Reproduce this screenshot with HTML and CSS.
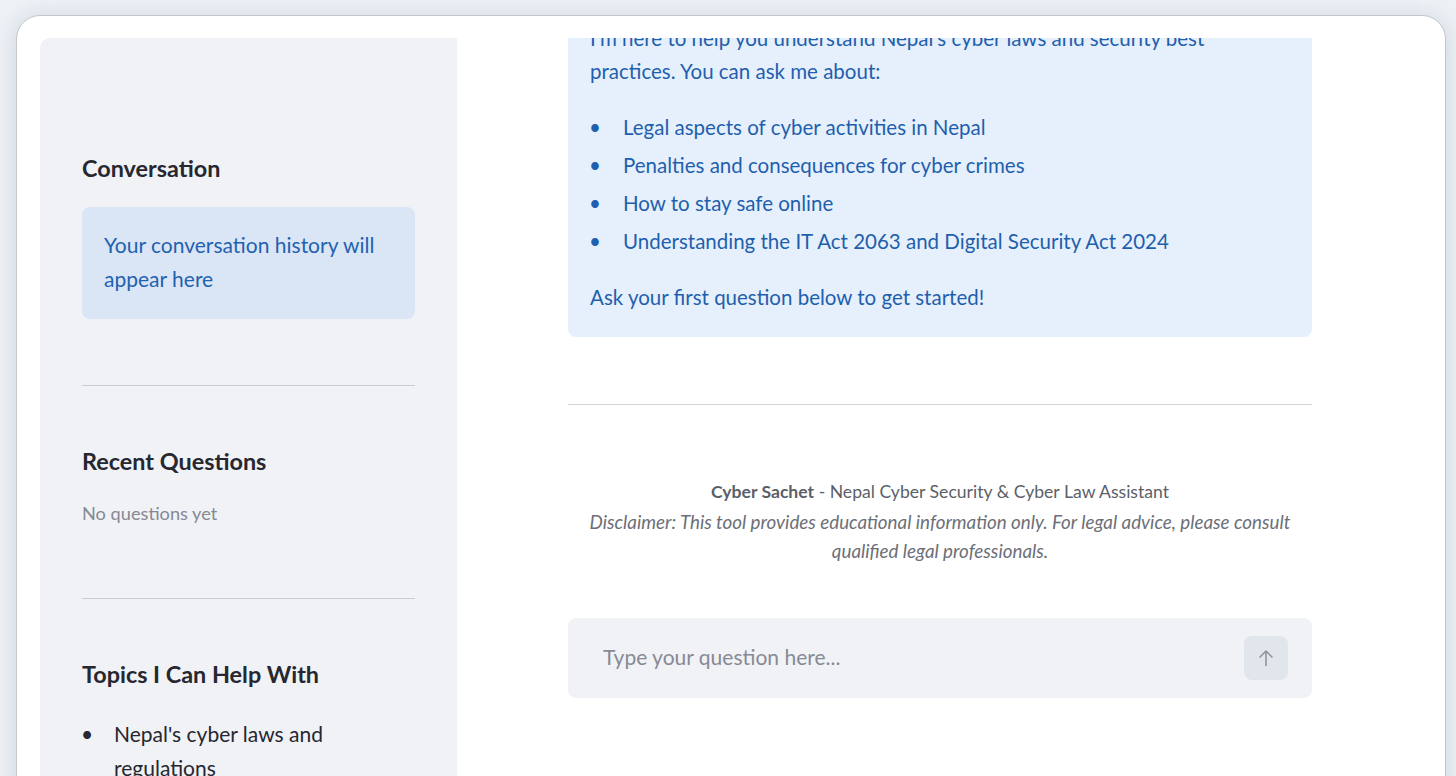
FILE: index.html
```html
<!DOCTYPE html>
<html lang="en">
<head>
    <meta charset="UTF-8">
    <meta name="viewport" content="width=device-width, initial-scale=1.0">
    <title>Cyber Sachet</title>
    <link rel="stylesheet" href="styles.css">
</head>
<body>
    <div class="window">
        <div class="app">
            <aside class="sidebar">
                <h3 class="side-title first">Conversation</h3>
                <div class="side-info">Your conversation history will appear here</div>
                <hr class="side-rule">

                <h3 class="side-title">Recent Questions</h3>
                <p class="muted">No questions yet</p>
                <hr class="side-rule lower">

                <h3 class="side-title">Topics I Can Help With</h3>
                <ul class="bullets topics">
                    <li>Nepal's cyber laws and regulations</li>
                    <li>Cybersecurity best practices</li>
                </ul>
            </aside>

            <main class="main">
                <div class="block">
                    <div class="welcome">
                        <p>I'm here to help you understand Nepal's cyber laws and security best practices. You can ask me about:</p>
                        <ul class="bullets">
                            <li>Legal aspects of cyber activities in Nepal</li>
                            <li>Penalties and consequences for cyber crimes</li>
                            <li>How to stay safe online</li>
                            <li>Understanding the IT Act 2063 and Digital Security Act 2024</li>
                        </ul>
                        <p>Ask your first question below to get started!</p>
                    </div>

                    <hr class="main-rule">

                    <div class="footer">
                        <p><strong>Cyber Sachet</strong> - Nepal Cyber Security &amp; Cyber Law Assistant</p>
                        <p class="disclaimer">Disclaimer: This tool provides educational information only. For legal advice, please consult qualified legal professionals.</p>
                    </div>

                    <form class="chat-input" onsubmit="return false">
                        <input type="text" placeholder="Type your question here...">
                        <button type="submit" class="send" aria-label="Send">
                            <svg viewBox="0 0 24 24" width="24" height="24"><path d="M12 4l-7 7 1.06 1.06L11.25 6.87V20h1.5V6.87l5.19 5.19L19 11z" fill="currentColor"/></svg>
                        </button>
                    </form>
                </div>
            </main>
        </div>
    </div>
</body>
</html>
```

FILE: styles.css
```css
html, body {
    margin: 0;
    height: 100%;
    overflow: hidden;
}
body {
    background: #eef1f5;
    font-family: Lato, "Noto Sans", sans-serif;
    color: #262730;
}

/* browser-like frame around the app */
.window {
    box-sizing: border-box;
    margin: 15px 0 0 16px;
    width: 1430px;
    height: 800px;
    padding: 22px 0 0 23px;
    background: #fff;
    border: 1px solid #c3c6cb;
    border-radius: 24px;
    box-shadow: 0 2px 22px rgba(140, 160, 190, 0.35);
}
.app {
    display: grid;
    grid-template-columns: 417px 1fr;
    height: 100%;
    overflow: hidden;
}

/* bullet lists with a wide gap between dot and text */
.bullets {
    list-style: none;
    padding-left: 33px;
}
.bullets li::before {
    content: "\2022";
    display: inline-block;
    width: 34px;
    margin-left: -34px;
}

/* sidebar */
.sidebar {
    background: #f0f2f6;
    border-top-left-radius: 10px;
    padding: 117px 42px 0;
}
.side-title {
    margin: 0;
    font-size: 23.4px;
    font-weight: 700;
    line-height: 26px;
}
.side-info {
    margin-top: 26px;
    padding: 21px 22px 23px;
    background: #dae5f6;
    border-radius: 8px;
    color: #1f62b0;
    font-size: 21px;
    line-height: 34px;
}
.side-rule {
    margin: 66px 0 62px;
    border: 0;
    border-top: 1px solid #c9ccd3;
}
.side-rule.lower {
    margin-top: 73px;
}
.muted {
    margin: 27px 0 0;
    font-size: 18.2px;
    line-height: 24px;
    color: #868994;
}
.topics {
    margin: 30px 0 0;
    padding-left: 32px;
    font-size: 21px;
    line-height: 34px;
}
.topics li::before {
    width: 33px;
    margin-left: -33px;
}

/* main column */
.main {
    overflow: hidden;
}
.block {
    width: 744px;
    margin: -38px 0 0 111px;
}
.welcome {
    padding: 22px 22px 23px;
    background: #e6f0fc;
    border-radius: 8px;
    color: #1f5fad;
    font-size: 20.5px;
    line-height: 33px;
}
.welcome p {
    margin: 0;
}
.welcome ul {
    margin: 23px 0;
}
.welcome li + li {
    margin-top: 5px;
}
.main-rule {
    margin: 67px 0 0;
    border: 0;
    border-top: 1px solid #d6d7db;
}
.footer {
    margin-top: 72px;
    text-align: center;
    font-size: 17.6px;
    line-height: 30px;
    color: #5c5f68;
}
.footer p {
    margin: 0;
}
.footer strong {
    font-weight: 700;
}
.disclaimer {
    font-size: 18.8px;
    line-height: 29px;
    font-style: italic;
    color: #6c6f78;
}

/* chat box */
.chat-input {
    display: flex;
    align-items: center;
    height: 80px;
    margin-top: 53px;
    padding: 0 24px 0 33px;
    background: #f0f2f6;
    border-radius: 8px;
}
.chat-input input {
    flex: 1;
    margin-bottom: 3px;
    border: 0;
    background: transparent;
    font: inherit;
    font-size: 21px;
    color: #262730;
    outline: none;
}
.chat-input input::placeholder {
    color: #878a95;
}
.send {
    display: flex;
    align-items: center;
    justify-content: center;
    width: 44px;
    height: 44px;
    padding: 0;
    border: 0;
    border-radius: 8px;
    background: #e1e5ec;
    color: #8c8f99;
}
```
